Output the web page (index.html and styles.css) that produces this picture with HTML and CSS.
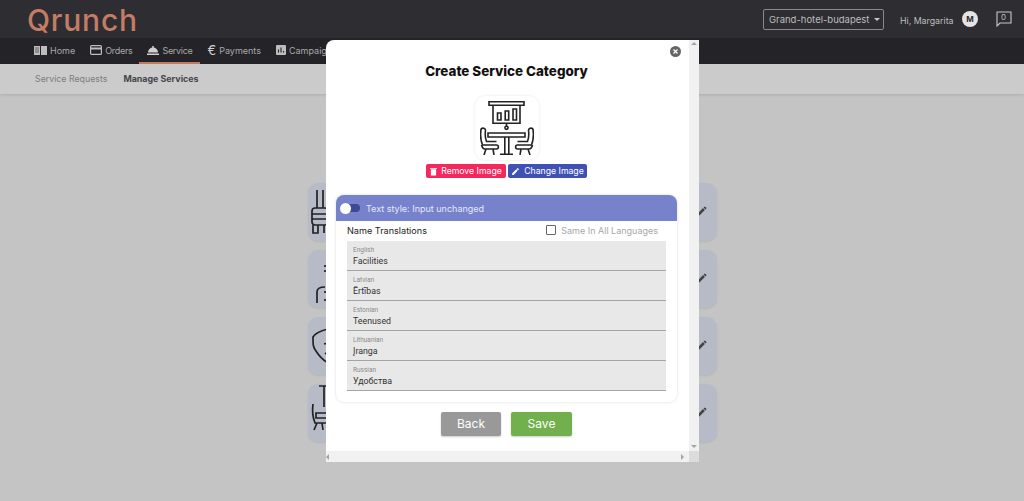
FILE: index.html
```html
<!DOCTYPE html>
<html lang="en">
<head>
    <meta charset="UTF-8">
    <meta name="viewport" content="width=device-width, initial-scale=1.0">
    <title>Qrunch</title>
    <link rel="stylesheet" href="styles.css">
</head>
<body>
    <header class="topbar">
        <div class="logo">Qrunch</div>
        <div class="topbar-right">
            <div class="hotel-select">Grand-hotel-budapest <span class="caret"></span></div>
            <span class="greeting">Hi, Margarita</span>
            <span class="avatar">M</span>
            <span class="chat">
                <svg width="16" height="16" viewBox="0 0 16 16" fill="none" stroke="#c9c9c9" stroke-width="1.1"><path d="M1 1h14v11H4l-3 3z"/></svg>
                <span class="chat-count">0</span>
            </span>
        </div>
    </header>

    <nav class="mainnav">
        <a class="nav-item">
            <svg width="13" height="11" viewBox="0 0 13 11" fill="#bdbdbd"><path d="M0 1h6v9H0zM7 1h6v9H7z"/><path d="M1 3h4M1 5h4M1 7h4" stroke="#232328" stroke-width=".6"/></svg>
            Home
        </a>
        <a class="nav-item nav-tight">
            <svg width="12" height="10" viewBox="0 0 12 10" fill="none" stroke="#bdbdbd" stroke-width="1.2"><rect x=".6" y=".6" width="10.8" height="8.8" rx="1"/><path d="M.6 3.5h10.8" stroke-width="2"/></svg>
            Orders
        </a>
        <a class="nav-item nav-tight active">
            <svg width="12" height="9" viewBox="0 0 12 9" fill="#d0d0d0"><path d="M1 6.500a5 5 0 0 1 10 0zM0 7.400h12V9H0z"/><circle cx="6" cy="1" r="1"/></svg>
            Service
        </a>
        <a class="nav-item">
            <span class="euro">€</span>
            Payments
        </a>
        <a class="nav-item">
            <svg width="10" height="10" viewBox="0 0 10 10"><rect width="10" height="10" rx="1" fill="#bdbdbd"/><path d="M2.500 4.500v3M5 2.500v5M7.500 6v1.500" stroke="#232328" stroke-width="1.100"/></svg>
            Campaigns
        </a>
    </nav>

    <div class="subnav">
        <a class="sub-item">Service Requests</a>
        <a class="sub-item current">Manage Services</a>
    </div>

    <main class="category-list">
        <div class="category-card">
            <svg class="card-icon" width="20" height="58" viewBox="0 0 20 58" fill="none" stroke="#222" stroke-width="1.700"><path d="M7 7v18M13 7v18"/><rect x="2" y="25" width="16" height="17" rx="3"/><path d="M2 31h16M2 36h16M3 42v8h5v-8M14 42v8"/></svg>
            <svg class="pencil" width="12" height="12" viewBox="0 0 24 24" fill="#444"><path d="M3 17.250V21h3.750L17.810 9.940l-3.750-3.750zM20.710 7.040a1 1 0 0 0 0-1.410l-2.340-2.340a1 1 0 0 0-1.410 0l-1.830 1.830 3.750 3.750z"/></svg>
        </div>
        <div class="category-card">
            <svg class="card-icon" width="20" height="58" viewBox="0 0 20 58" fill="none" stroke="#222" stroke-width="1.700"><path d="M7 53V42c0-3 3-5 8-5M15 15v2M15 20v2M15 41v2M15 49v2"/></svg>
            <svg class="pencil" width="12" height="12" viewBox="0 0 24 24" fill="#444"><path d="M3 17.250V21h3.750L17.810 9.940l-3.750-3.750zM20.710 7.040a1 1 0 0 0 0-1.410l-2.340-2.340a1 1 0 0 0-1.410 0l-1.830 1.830 3.750 3.750z"/></svg>
        </div>
        <div class="category-card">
            <svg class="card-icon" width="20" height="58" viewBox="0 0 20 58" fill="none" stroke="#222" stroke-width="1.700"><path d="M18 12C10 14 5 16 3 20c0 8 0 10 3 14 3 5 7 9 12 12M14 27l4-1M15 36l3 2"/></svg>
            <svg class="pencil" width="12" height="12" viewBox="0 0 24 24" fill="#444"><path d="M3 17.250V21h3.750L17.810 9.940l-3.750-3.750zM20.710 7.040a1 1 0 0 0 0-1.410l-2.340-2.340a1 1 0 0 0-1.410 0l-1.830 1.830 3.750 3.750z"/></svg>
        </div>
        <div class="category-card">
            <svg class="card-icon" width="20" height="58" viewBox="0 0 20 58" fill="none" stroke="#222" stroke-width="1.700"><path d="M9 2h9M14 2v21M3 20c-1 7 0 14 2 19h13M6 29h12v5H6zM7 39l-3 7M12 39l1 7"/></svg>
            <svg class="pencil" width="12" height="12" viewBox="0 0 24 24" fill="#444"><path d="M3 17.250V21h3.750L17.810 9.940l-3.750-3.750zM20.710 7.040a1 1 0 0 0 0-1.410l-2.340-2.340a1 1 0 0 0-1.410 0l-1.830 1.830 3.750 3.750z"/></svg>
        </div>
    </main>

    <div class="modal">
        <div class="modal-body">
            <button class="modal-close">
                <svg width="11" height="11" viewBox="0 0 11 11"><circle cx="5.500" cy="5.500" r="5.500" fill="#666"/><path d="M3.500 3.500l4 4M7.500 3.500l-4 4" stroke="#fff" stroke-width="1.200"/></svg>
            </button>
            <h2 class="modal-title">Create Service Category</h2>
            <div class="image-box">
                <svg width="54" height="54" viewBox="0 0 54 54" fill="none" stroke="#222" stroke-width="1.600">
                    <path d="M9 .8h35v3.400H9zM13 4.200v18h27v-18"/>
                    <path d="M17.500 12h3.500v7h-3.500zM25.200 10h3.500v9h-3.500zM33 8h3.500v11H33z"/>
                    <path d="M26.500 22.200v3"/>
                    <circle cx="26.500" cy="26.800" r="1.600"/>
                    <path d="M8 32h37v4H8zM24.800 36v17M28.800 36v17M20 53.200h13"/>
                    <path d="M1 29c-1 6 0 11 1.500 15h14c2.500 0 2.500 4 0 4H5c-2 0-3-2-3.500-4M1 29c0-2.500 4-2.500 4.500 0-.5 4-.5 8 1 11.500h10"/>
                    <path d="M53 29c1 6 0 11-1.500 15h-14c-2.500 0-2.500 4 0 4H49c2 0 3-2 3.500-4M53 29c0-2.500-4-2.500-4.500 0 .5 4 .5 8-1 11.500h-10"/>
                    <path d="M6 48l-2 6M13 48l1 6M48 48l2 6M41 48l-1 6"/>
                </svg>
            </div>
            <div class="image-actions">
                <button class="btn-small btn-remove">
                    <svg width="7" height="9" viewBox="0 0 8 9" fill="#fff"><path d="M1 2h6v7H1zM0 .7h8v.9H0z"/></svg>
                    Remove Image
                </button>
                <button class="btn-small btn-change">
                    <svg width="9" height="9" viewBox="0 0 24 24" fill="#fff"><path d="M3 17.250V21h3.750L17.810 9.940l-3.750-3.750zM20.710 7.040a1 1 0 0 0 0-1.410l-2.340-2.340a1 1 0 0 0-1.410 0l-1.830 1.830 3.750 3.750z"/></svg>
                    Change Image
                </button>
            </div>

            <section class="panel">
                <div class="panel-head">
                    <span class="toggle"><span class="toggle-knob"></span></span>
                    <span>Text style: Input unchanged</span>
                </div>
                <div class="panel-content">
                    <div class="translations-head">
                        <span class="translations-title">Name Translations</span>
                        <label class="same-all"><span class="checkbox"></span>Same In All Languages</label>
                    </div>
                    <div class="field"><span class="field-label">English</span><span class="field-value">Facilities</span></div>
                    <div class="field"><span class="field-label">Latvian</span><span class="field-value">Ērtības</span></div>
                    <div class="field"><span class="field-label">Estonian</span><span class="field-value">Teenused</span></div>
                    <div class="field"><span class="field-label">Lithuanian</span><span class="field-value">Įranga</span></div>
                    <div class="field"><span class="field-label">Russian</span><span class="field-value">Удобства</span></div>
                </div>
            </section>

            <div class="modal-actions">
                <button class="btn btn-back">Back</button>
                <button class="btn btn-save">Save</button>
            </div>
        </div>
        <div class="scroll-v"><span class="arrow-up"></span><span class="arrow-down"></span></div>
        <div class="scroll-h"><span class="arrow-left"></span><span class="arrow-right"></span></div>
        <div class="scroll-corner"></div>
    </div>
</body>
</html>
```

FILE: styles.css
```css
* {
    box-sizing: border-box;
}
body {
    margin: 0;
    height: 501px;
    overflow: hidden;
    font-family: 'Inter', 'Open Sans', sans-serif;
    background-color: #c4c4c4;
}
.topbar {
    height: 38px;
    background-color: #2d2d32;
    display: flex;
    justify-content: space-between;
    align-items: center;
    padding: 0 12px 0 27px;
}
.logo {
    font-size: 30px;
    font-weight: 500;
    line-height: 38px;
    color: #c47c64;
    letter-spacing: 0.8px;
    margin-top: 2px;
}
.topbar-right {
    display: flex;
    align-items: center;
    color: #bdbdbd;
    font-size: 8.800px;
}
.hotel-select {
    width: 121px;
    height: 21px;
    border: 1px solid #8a8a8a;
    border-radius: 2px;
    display: flex;
    align-items: center;
    gap: 5px;
    padding-left: 5px;
    margin: 0 16px 0 0;
    font-size: 9.500px;
    white-space: nowrap;
}
.caret {
    width: 0;
    height: 0;
    border: 3px solid transparent;
    border-top-color: #c9c9c9;
    border-bottom-width: 0;
}
.greeting {
    width: 62px;
    white-space: nowrap;
    margin-top: 2px;
}
.avatar {
    width: 16px;
    height: 16px;
    border-radius: 50%;
    background-color: #e4e4e4;
    color: #2d2d32;
    font-weight: 700;
    font-size: 8px;
    display: flex;
    align-items: center;
    justify-content: center;
    margin-right: 18px;
}
.chat {
    position: relative;
    width: 16px;
    height: 16px;
    margin-top: -1px;
}
.chat-count {
    position: absolute;
    left: 5px;
    top: 1px;
    font-size: 8px;
}
.mainnav {
    height: 26px;
    background-color: #232328;
    display: flex;
    padding-left: 26px;
}
.nav-item {
    height: 26px;
    display: flex;
    align-items: center;
    gap: 3px;
    padding: 0 7px 0 8px;
    color: #a9a9a9;
    font-size: 9px;
    white-space: nowrap;
    border-bottom: 2px solid transparent;
}
.nav-tight {
    letter-spacing: -0.3px;
}
.nav-item.active {
    border-bottom-color: #c47c64;
}
.euro {
    color: #d0d0d0;
    font-size: 13px;
    line-height: 1;
}
.subnav {
    height: 30px;
    background-color: #cbcbcb;
    display: flex;
    align-items: center;
    gap: 16px;
    padding: 0 0 2px 35px;
    box-shadow: 0 1px 3px rgba(0,0,0,0.12);
    position: relative;
}
.sub-item {
    font-size: 8.800px;
    color: #7d7d7d;
}
.sub-item.current {
    color: #45454a;
    font-size: 8.900px;
    font-weight: 700;
}
.category-list {
    width: 409px;
    margin-left: 308px;
    padding-top: 89px;
    display: flex;
    flex-direction: column;
    gap: 9px;
}
.category-card {
    height: 58px;
    border-radius: 10px;
    background-color: #b7bbc7;
    display: flex;
    align-items: center;
    justify-content: space-between;
    padding: 0 9px 0 2px;
    box-shadow: 0 1px 2px rgba(0,0,0,0.08);
}
.pencil {
    margin-top: -2px;
}
.modal {
    position: fixed;
    left: 326px;
    top: 40px;
    width: 373px;
    height: 422px;
    background-color: #fff;
    display: grid;
    grid-template-columns: 363px 10px;
    grid-template-rows: 411px 11px;
    border-radius: 8px 0 0 0;
}
.modal-body {
    position: relative;
    overflow: hidden;
    padding: 24px 12px 0 10px;
    display: flex;
    flex-direction: column;
    align-items: center;
}
.modal-close {
    position: absolute;
    right: 8px;
    top: 6px;
    border: none;
    background: none;
    padding: 0;
    display: flex;
}
.modal-title {
    margin: 0 0 16px;
    font-size: 13.400px;
    line-height: 14px;
    font-weight: 800;
    color: #111;
    height: 16px;
    white-space: nowrap;
}
.image-box {
    width: 64px;
    height: 64px;
    border-radius: 10px;
    display: flex;
    align-items: center;
    justify-content: center;
    box-shadow: 0 0 3px rgba(0,0,0,0.1);
    margin-bottom: 4px;
}
.image-actions {
    display: flex;
    gap: 2px;
    margin-bottom: 17px;
}
.btn-small {
    height: 14px;
    border: none;
    border-radius: 2px;
    color: #fff;
    font-family: inherit;
    font-size: 8.700px;
    display: flex;
    align-items: center;
    justify-content: center;
    gap: 4px;
    padding: 0;
    white-space: nowrap;
}
.btn-remove {
    width: 80px;
    background-color: #f5285e;
}
.btn-change {
    width: 79px;
    background-color: #3f51b5;
}
.panel {
    width: 341px;
    height: 207px;
    border-radius: 8px;
    box-shadow: 0 0 3px rgba(0,0,0,0.15);
    overflow: hidden;
    margin-bottom: 10px;
    flex-shrink: 0;
}
.panel-head {
    height: 26px;
    background-color: #7682cc;
    color: #e6e8f6;
    font-size: 9px;
    display: flex;
    align-items: center;
    gap: 6px;
    padding-left: 4px;
}
.toggle {
    width: 20px;
    height: 8px;
    border-radius: 4px;
    background-color: #3f4a94;
    position: relative;
}
.toggle-knob {
    position: absolute;
    left: 0;
    top: -1.500px;
    width: 11px;
    height: 11px;
    border-radius: 50%;
    background-color: #fff;
}
.panel-content {
    padding: 0 11px;
}
.translations-head {
    height: 20px;
    display: flex;
    align-items: center;
    justify-content: space-between;
    padding: 0 8px 2px 0;
}
.translations-title {
    font-size: 9.100px;
    color: #222;
}
.same-all {
    display: flex;
    align-items: center;
    gap: 5px;
    font-size: 9px;
    color: #a8a8a8;
}
.checkbox {
    width: 10px;
    height: 10px;
    border: 1px solid #666;
    border-radius: 1px;
}
.field {
    height: 30px;
    background-color: #e8e8e8;
    border-bottom: 1px solid #a5a5a5;
    display: flex;
    flex-direction: column;
    padding: 5px 6px 0;
    font-family: 'Roboto', sans-serif;
}
.field-label {
    font-size: 6.500px;
    line-height: 8px;
    color: #8a8a8a;
}
.field-value {
    font-size: 8.800px;
    line-height: 13px;
    margin-top: 1px;
    color: #333;
}
.modal-actions {
    display: flex;
    gap: 10px;
}
.btn {
    width: 60px;
    height: 24px;
    border: none;
    border-radius: 2px;
    color: #fff;
    font-family: inherit;
    font-size: 12px;
    padding: 0 0 2px;
    box-shadow: 0 1px 2px rgba(0,0,0,0.2);
}
.btn-back {
    background-color: #999;
}
.btn-save {
    width: 61px;
    background-color: #72b04e;
}
.scroll-v {
    background-color: #f1f1f1;
    position: relative;
}
.scroll-h {
    background-color: #f1f1f1;
    position: relative;
}
.scroll-corner {
    background-color: #dcdcdc;
}
.arrow-up, .arrow-down, .arrow-left, .arrow-right {
    position: absolute;
    width: 0;
    height: 0;
    border: 3px solid transparent;
}
.arrow-up {
    left: 2px;
    top: 2px;
    border-bottom-color: #a3a3a3;
    border-top-width: 0;
}
.arrow-down {
    left: 2px;
    bottom: 3px;
    border-top-color: #a3a3a3;
    border-bottom-width: 0;
}
.arrow-left {
    left: 0;
    top: 3px;
    border-right-color: #a3a3a3;
    border-left-width: 0;
}
.arrow-right {
    right: 5px;
    top: 3px;
    border-left-color: #a3a3a3;
    border-right-width: 0;
}
```
